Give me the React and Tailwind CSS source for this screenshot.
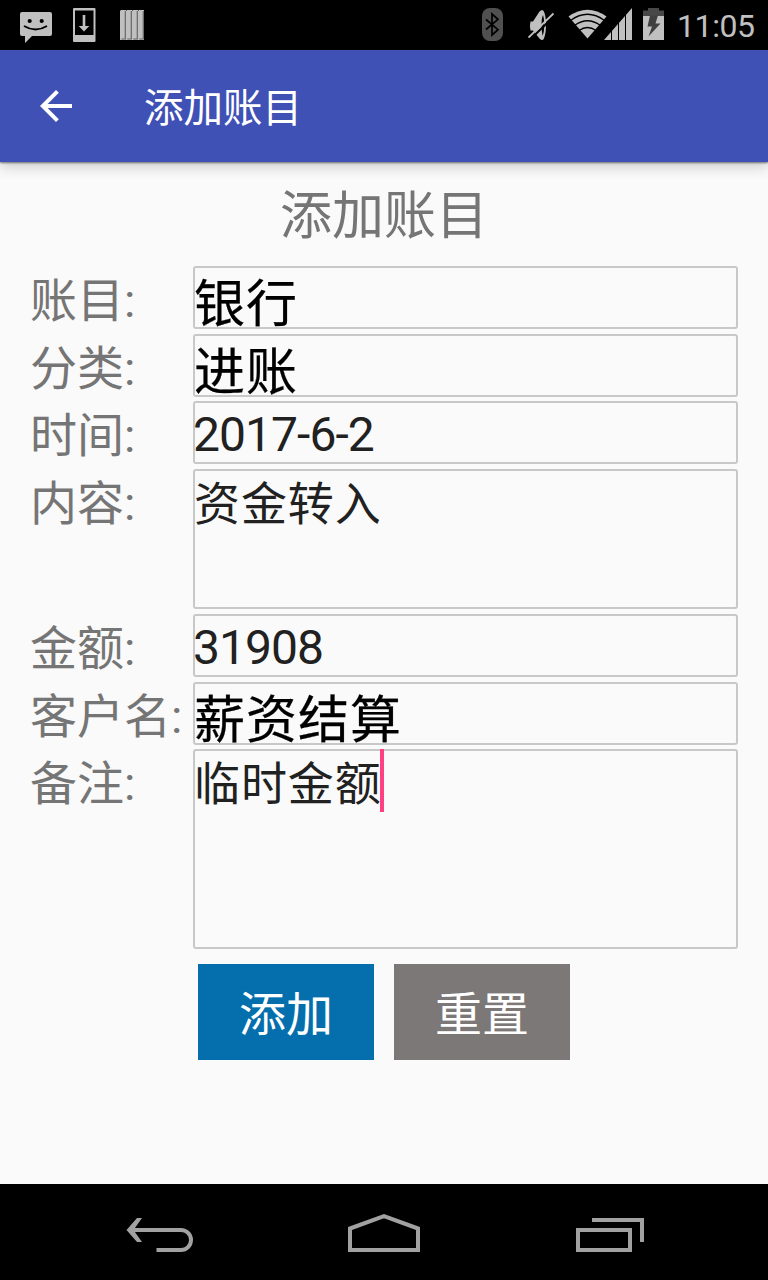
const FONT = "font-['Roboto','Noto_Sans_CJK_SC',sans-serif]";

function StatusBar() {
  return (
    <div className="flex h-[50px] shrink-0 items-center bg-black pl-5 pr-3 text-[#c0c0c0]">
      <svg className="h-[50px] w-8" viewBox="20 0 32 50" fill="currentColor">
        <path d="M22 12h28q2 0 2 2v20q0 2-2 2H32l-7 7v-7h-3q-2 0-2-2V14q0-2 2-2z" />
        <circle cx="29.7" cy="21" r="2.1" fill="#000" />
        <circle cx="41.7" cy="21" r="2.1" fill="#000" />
        <path d="M24 26q11.5 7 23 0" fill="none" stroke="#000" strokeWidth="2" />
      </svg>
      <svg className="ml-5 h-[50px] w-6" viewBox="72 0 24 50" fill="currentColor">
        <path d="M74 8h20.5q1 0 1 1v32q0 1-1 1H74q-1 0-1-1V9q0-1 1-1z" />
        <path d="M75 10.5h18.500V35H75z" fill="#000" />
        <path d="M82.700 15h2.600v11h4l-5.300 5.500-5.300-5.500h4z" />
      </svg>
      <svg className="ml-6 h-[50px] w-6" viewBox="120 0 24 50">
        {[120, 126, 132, 138].map((x) => (
          <g key={x}>
            <path d={`M${x} 11l1-1h5v30h-6z`} fill="#c0c0c0" />
            <path d={`M${x + 5.3} 11v28h-4`} fill="none" stroke="#666" strokeWidth="1.2" />
          </g>
        ))}
      </svg>
      <div className="ml-auto flex items-center">
        <svg className="h-[50px] w-[22px]" viewBox="482 0 22 50">
          <rect x="482" y="8" width="21" height="33" rx="8" fill="#505050" />
          <path d="M486 19.500l12 10.200-6 5.300V14l6 5.300-12 10.200" fill="none" stroke="#000" strokeWidth="1.700" />
        </svg>
        <svg className="ml-6 h-[50px] w-[27px]" viewBox="528 0 27 50">
          <path d="M530.500 21.500h2.500l6.500-10q3.500-3.500 4.800 1c2.300 6 2.300 19 0 25q-1.300 4.500-4.800 1l-6.500-8h-2.500q-1.200-4.500 0-9z" fill="#c0c0c0" />
          <path d="M543 15q-1.500 3-1.500 10t1.200 11q1.600-4.500 1.600-11t-1.300-10z" fill="#000" />
          <path d="M530 39.500L555 15.500" stroke="#000" strokeWidth="2" />
          <path d="M528.500 37.500L553.500 13.500" stroke="#c0c0c0" strokeWidth="1.800" />
        </svg>
        <svg className="ml-[13px] h-[50px] w-[39px]" viewBox="568 0 39 50">
          <path d="M568.500 16.500q19-13.500 38 0L587.500 38.500z" fill="#c0c0c0" />
          <path d="M570.500 20.500q17-12.500 34 0M574.500 25.500q13-9.500 26 0M579 30.500q8.500-6 17 0" fill="none" stroke="#000" strokeWidth="1.300" />
        </svg>
        <svg className="-ml-[3px] h-[50px] w-7" viewBox="604 0 28 50">
          <path d="M604 40L632 8v32z" fill="#c0c0c0" />
          <path d="M611.500 28v12M618.500 20v20M625.500 12v28" stroke="#000" strokeWidth="1" />
        </svg>
        <svg className="ml-[11px] h-[50px] w-[21px]" viewBox="643 0 21 50">
          <path d="M643 16h21v24h-21z" fill="#c0c0c0" />
          <path d="M648 8h11v2.500h5V16h-21v-5.500h5z" fill="#484848" />
          <path d="M650 15.500h8l-2.500 8h5l-12 13 3.500-10h-4.500z" fill="#404040" />
        </svg>
        <span className="ml-[13px] w-[79px] pt-0.5 text-[32px] leading-none tracking-[-0.4px] whitespace-nowrap">11:05</span>
      </div>
    </div>
  );
}

function Field({ label, value, size = "h-[63px]", kind = "edit", gap = "mt-[5px]", focused = false }) {
  const text =
    kind === "spinner"
      ? "pl-px text-[51px] leading-[78px] tracking-[1px] text-black [-webkit-text-stroke:0.25px_black]"
      : kind === "number"
        ? "text-[48px] leading-[67px] tracking-[-0.95px] text-[#212121]"
        : "pl-px text-[46px] leading-[70px] tracking-[0.9px] text-[#212121]";
  return (
    <div className={`flex items-start ${gap}`}>
      <div className="h-[63px] w-[163px] shrink-0 text-[47px] leading-[70px] whitespace-nowrap text-[#757575]">{label}</div>
      <div className={`w-[545px] rounded-[3px] border-2 border-[#c8c8c8] ${size}`}>
        <div className={`-mt-0.5 -ml-0.5 flex whitespace-nowrap ${text}`}>
          <span className="relative">
            {value}
            {focused && <span className="absolute top-0 -right-[2px] h-[63px] w-1 bg-[#ff4081]" />}
          </span>
        </div>
      </div>
    </div>
  );
}

function NavigationBar() {
  return (
    <div className="flex h-24 shrink-0 items-center justify-between bg-black pl-[124px] pr-[122px]">
      <svg className="h-24 w-[72px]" viewBox="124 1184 72 96" fill="none" stroke="#a1a1a1" strokeWidth="4">
        <path d="M133 1230h48a10 10 0 0 1 0 20h-24.500" />
        <path d="M137 1218h5l-8.500 12 8.500 12h-5l-10.500-12z" fill="#a1a1a1" stroke="none" />
      </svg>
      <svg className="h-24 w-[74px]" viewBox="348 1184 74 96" fill="none" stroke="#a1a1a1" strokeWidth="4">
        <path d="M350 1250v-21.500l34-12.300 34 12.300V1250z" />
      </svg>
      <svg className="h-24 w-[72px]" viewBox="574 1184 72 96" fill="none" stroke="#a1a1a1" strokeWidth="4">
        <path d="M578 1230h52v20h-52zM592 1220h50v22" />
      </svg>
    </div>
  );
}

export default function App() {
  return (
    <div className={`flex h-[1280px] w-[768px] flex-col overflow-hidden bg-[#fafafa] ${FONT}`}>
      <StatusBar />
      <header className="relative flex h-28 shrink-0 items-center bg-[#3f51b5] pl-8 text-white shadow-[0_1px_2px_rgba(0,0,0,0.5),0_6px_12px_rgba(0,0,0,0.16)]">
        <svg className="size-12" viewBox="0 0 24 24" fill="currentColor">
          <path d="M20 11H7.830l5.590-5.590L12 4l-8 8 8 8 1.410-1.410L7.830 13H20v-2z" />
        </svg>
        <h1 className="ml-16 pt-1.5 text-[39.500px] leading-none">添加账目</h1>
      </header>
      <main className="flex grow flex-col pl-[30px]">
        <h2 className="mt-3 h-[87px] pr-[30px] text-center text-[52px] leading-[85px] text-[#757575]">添加账目</h2>
        <Field label="账目:" value="银行" kind="spinner" gap="mt-[5px]" />
        <Field label="分类:" value="进账" kind="spinner" />
        <Field label="时间:" value="2017-6-2" kind="number" gap="mt-1" />
        <Field label="内容:" value="资金转入" size="h-[140px]" />
        <Field label="金额:" value="31908" kind="number" />
        <Field label="客户名:" value="薪资结算" kind="spinner" />
        <Field label="备注:" value="临时金额" size="h-[200px]" gap="mt-1" focused />
        <div className="mt-[15px] flex gap-5 pl-[168px] text-[47px] text-white">
          <button className="h-24 w-44 bg-[#056eac] pt-1.5">添加</button>
          <button className="h-24 w-44 bg-[#7c7877] pt-1.5">重置</button>
        </div>
      </main>
      <NavigationBar />
    </div>
  );
}
